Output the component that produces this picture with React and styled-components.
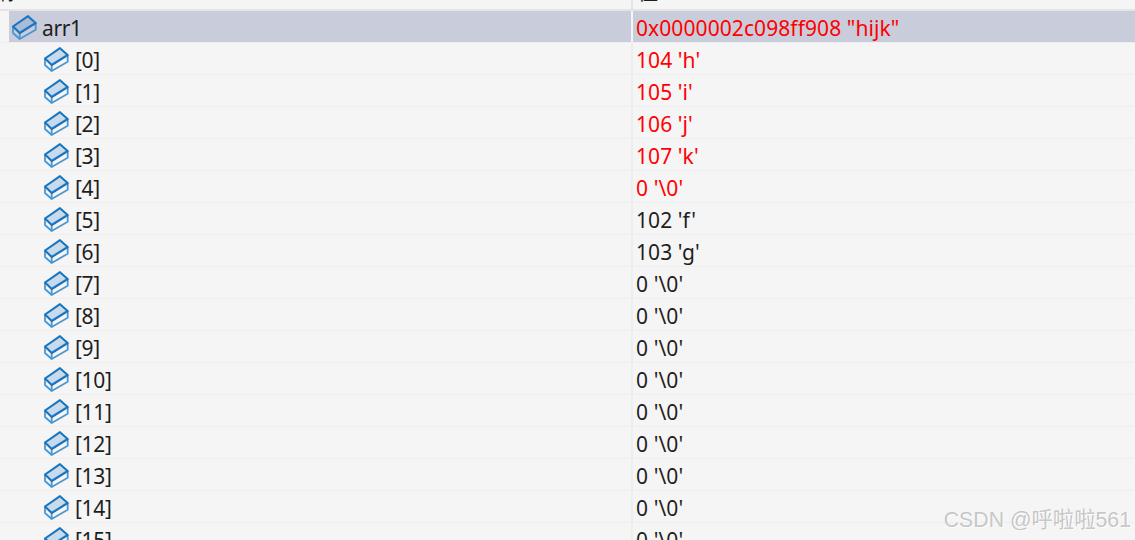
import React from "react"
import styled, { createGlobalStyle } from "styled-components"

const GlobalStyle = createGlobalStyle`
  html, body {
    margin: 0;
    padding: 0;
    background: #f5f5f5;
    overflow: hidden;
  }
`

const Window = styled.div`
  position: relative;
  width: 1135px;
  height: 540px;
  overflow: hidden;
  background: #f5f5f5;
  font-family: "Noto Sans", "Noto Sans CJK SC", sans-serif;
  font-size: 21px;
  color: #1e1e1e;
`

const Header = styled.div`
  display: grid;
  grid-template-columns: 633px 1fr;
  height: 9px;
  overflow: hidden;
  border-bottom: 2px solid #e4e4e4;
`

const HeaderCell = styled.div`
  box-sizing: border-box;
  height: 9px;
  overflow: hidden;
  font-size: 20px;
  line-height: 30px;
  white-space: nowrap;
  border-right: ${p => (p.$divider ? "2px solid #e4e4e4" : "none")};
`

const HeaderLabel = styled.span`
  display: block;
  margin-top: -22px;
  margin-left: ${p => p.$shift}px;
`

const Row = styled.div`
  display: grid;
  grid-template-columns: 633px 1fr;
  height: 32px;
  box-sizing: border-box;
  border-bottom: 1px solid #eeeeee;
`

const NameCell = styled.div`
  display: flex;
  align-items: center;
  gap: ${p => (p.$selected ? 5 : 6)}px;
  box-sizing: border-box;
  padding-top: 2px;
  padding-left: ${p => p.$indent}px;
  letter-spacing: -0.35px;
  background: ${p => (p.$selected ? "#c9ccda" : "transparent")};
  margin-left: ${p => (p.$selected ? "9px" : "0")};
  border-right: 2px solid ${p => (p.$selected ? "#f5f5f5" : "#eeeeee")};
`

const ValueCell = styled.div`
  display: flex;
  align-items: center;
  box-sizing: border-box;
  padding: 2px 0 0 3px;
  white-space: pre;
  letter-spacing: 0.08px;
  color: ${p => (p.$changed ? "#ff0000" : "#1e1e1e")};
  background: ${p => (p.$selected ? "#c9ccda" : "transparent")};
`

const Watermark = styled.div`
  position: absolute;
  right: 4px;
  bottom: 7px;
  font-family: "Liberation Sans", "Noto Sans CJK SC", sans-serif;
  font-size: 21.3px;
  color: rgba(120, 120, 120, 0.4);
  text-shadow: 1px 1px 1px rgba(255, 255, 255, 0.7);
  white-space: nowrap;
`

const IconSvg = styled.svg`
  flex: none;
  width: 26px;
  height: 26px;
  margin-top: -1px;
`

const FieldIcon = ({ selected }) => (
  <IconSvg viewBox="0 0 26 26" fill="none">
    <path
      d="M2 12.5 L2 19 L8.7 25 L24.7 15.7 L24.7 9 M8.7 19 L8.7 25"
      stroke="#4d97d1"
      strokeWidth="1.8"
      strokeLinejoin="round"
    />
    <path
      d="M2 12.5 L17 2.2 L24.7 9 L8.7 19 Z"
      fill={selected ? "#a6bcd8" : "#c7dbec"}
      stroke="#1b74bd"
      strokeWidth="2.1"
      strokeLinejoin="round"
    />
  </IconSvg>
)

const items = [
  ["[0]", "104 'h'", true],
  ["[1]", "105 'i'", true],
  ["[2]", "106 'j'", true],
  ["[3]", "107 'k'", true],
  ["[4]", "0 '\\0'", true],
  ["[5]", "102 'f'", false],
  ["[6]", "103 'g'", false],
  ["[7]", "0 '\\0'", false],
  ["[8]", "0 '\\0'", false],
  ["[9]", "0 '\\0'", false],
  ["[10]", "0 '\\0'", false],
  ["[11]", "0 '\\0'", false],
  ["[12]", "0 '\\0'", false],
  ["[13]", "0 '\\0'", false],
  ["[14]", "0 '\\0'", false],
  ["[15]", "0 '\\0'", false],
]

const App = () => (
  <Window>
    <GlobalStyle />
    <Header>
      <HeaderCell $divider>
        <HeaderLabel $shift={-2}>称</HeaderLabel>
      </HeaderCell>
      <HeaderCell>
        <HeaderLabel $shift={5}>值</HeaderLabel>
      </HeaderCell>
    </Header>
    <Row>
      <NameCell $indent={2} $selected>
        <FieldIcon selected />
        arr1
      </NameCell>
      <ValueCell $changed $selected>0x0000002c098ff908 "hijk"</ValueCell>
    </Row>
    {items.map(([name, value, changed]) => (
      <Row key={name}>
        <NameCell $indent={43}>
          <FieldIcon />
          {name}
        </NameCell>
        <ValueCell $changed={changed}>{value}</ValueCell>
      </Row>
    ))}
    <Watermark>CSDN @呼啦啦561</Watermark>
  </Window>
)

export default App
